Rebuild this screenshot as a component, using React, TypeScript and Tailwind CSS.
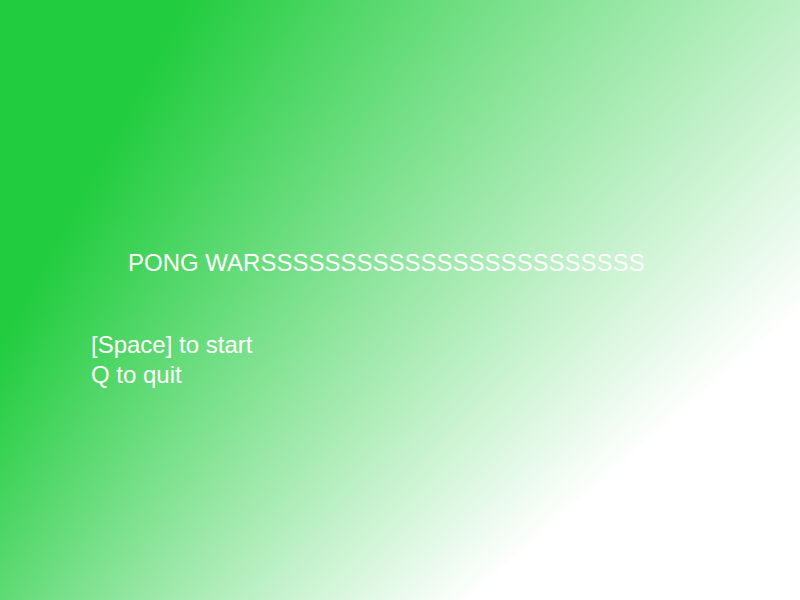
import React from "react";

export default function App() {
  return (
    <div
      className="w-[800px] h-[600px] overflow-hidden flex flex-col text-white text-[24px] leading-[28px] bg-[image:conic-gradient(from_0deg_at_-680px_1600px,#22cc3f_0deg,#22cc3f_28.5deg,#ffffff_49deg,#ffffff_360deg)]"
      style={{ fontFamily: '"Liberation Sans", Arial, Helvetica, sans-serif' }}
    >
      <div className="mt-[249px] ml-[128px] whitespace-nowrap">
        PONG WARSSSSSSSSSSSSSSSSSSSSSSSS
      </div>
      <div className="mt-[53px] ml-[91px] flex flex-col leading-[30px]">
        <div>[Space] to start</div>
        <div>Q to quit</div>
      </div>
    </div>
  );
}
